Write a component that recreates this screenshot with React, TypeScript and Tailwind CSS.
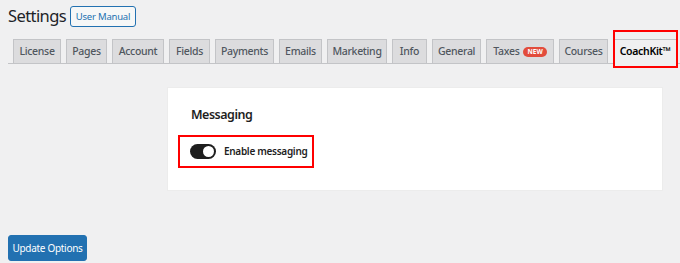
const tabs = [
  { label: "License", w: "w-[48px]" },
  { label: "Pages", w: "w-[41px]" },
  { label: "Account", w: "w-[52px]" },
  { label: "Fields", w: "w-[41px]" },
  { label: "Payments", w: "w-[59px]" },
  { label: "Emails", w: "w-[43px]" },
  { label: "Marketing", w: "w-[60px]" },
  { label: "Info", w: "w-[35px]" },
  { label: "General", w: "w-[49px]" },
  { label: "Taxes", w: "w-[68px]", badge: true },
  { label: "Courses", w: "w-[49px]" },
];

export default function App() {
  return (
    <div className="w-[680px] h-[263px] bg-[#f0f0f1] pl-[8px] font-['Noto_Sans',sans-serif] text-[#1d2327] overflow-hidden whitespace-nowrap">
      <div className="flex items-center pt-[5px] h-[28px] gap-[4px]">
        <h1 className="text-[16.5px] leading-none tracking-[-0.6px] text-[#1d2327]">Settings</h1>
        <button className="h-[21px] w-[66px] rounded-[3px] border border-[#2271b1] bg-[#f6f7f7] text-[#2271b1] text-[9.5px] tracking-[-0.2px] leading-none">
          User Manual
        </button>
      </div>

      <nav className="flex items-end gap-[5px] mt-[11px] pl-[5px] border-b border-[#c3c4c7] h-[25px]">
        {tabs.map((t) => (
          <div
            key={t.label}
            className={`${t.w} h-[25px] -mb-px flex items-center justify-center gap-[4px] pt-[1px] bg-[#dcdcde] border border-[#c3c4c7] text-[10.5px] font-medium tracking-[-0.3px] text-[#50575e]`}
          >
            {t.label}
            {t.badge && (
              <span className="rounded-full bg-[#e24c3c] text-white text-[6.5px] font-bold tracking-normal leading-none px-[4px] py-[2px]">
                NEW
              </span>
            )}
          </div>
        ))}
        <div className="relative w-[64px] h-[25px] -mb-px flex items-center justify-center pt-[1px] bg-[#f0f0f1] border border-[#c3c4c7] border-b-[#f0f0f1] text-[10.5px] font-semibold tracking-[-0.3px] text-black">
          CoachKit™
          <div className="absolute -left-[1px] -right-[2px] -top-[10px] -bottom-[5px] border-2 border-[#ff0000]" />
        </div>
      </nav>

      <div className="ml-[159px] mt-[23px] w-[496px] h-[104px] bg-white border border-[#ececec] pl-[23px] pt-[21px]">
        <h2 className="text-[12.5px] font-semibold tracking-[-0.5px] text-[#1e1e1e] leading-none">Messaging</h2>
        <div className="relative mt-[13px] -ml-[13px] w-[136px] h-[33px] border-2 border-[#ff0000] flex items-center pl-[10px] gap-[8px]">
          <span className="w-[26px] h-[15px] rounded-full bg-[#1e1e1e] flex items-center justify-end pr-[2px]">
            <span className="w-[11px] h-[11px] rounded-full bg-white" />
          </span>
          <span className="text-[10px] font-semibold tracking-[-0.3px] text-[#1e1e1e]">Enable messaging</span>
        </div>
      </div>

      <button className="mt-[44px] w-[79px] h-[26px] rounded-[3px] bg-[#2271b1] border border-[#2271b1] text-white text-[10px] tracking-[-0.3px] leading-none">
        Update Options
      </button>
    </div>
  );
}
